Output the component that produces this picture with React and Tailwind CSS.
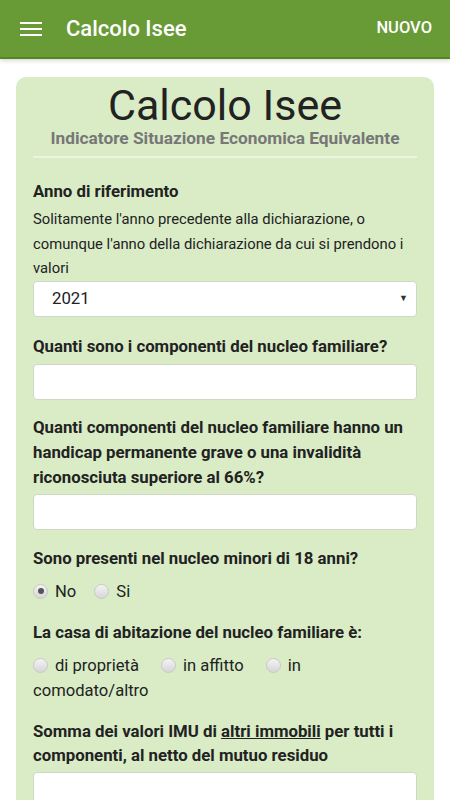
import React from "react";

function Radio({ checked }) {
  return (
    <span className="inline-block align-[-2px] w-[15px] h-[15px] rounded-full border border-[#c8c8c8] bg-[linear-gradient(#f4f4f4,#d6d6d6)] relative mr-[7px]">
      {checked && (
        <span className="absolute left-[3.5px] top-[3.5px] w-[6px] h-[6px] rounded-full bg-[#555]" />
      )}
    </span>
  );
}

function Input() {
  return <div className="h-[36px] bg-white rounded-[4px] border border-[#cfd8c6]" />;
}

export default function App() {
  return (
    <div className="w-[450px] min-h-[800px] bg-white font-['Roboto',sans-serif] text-[#222]">
      <div className="h-[59px] bg-[#689a35] border-b-[2px] border-[#55861f] shadow-[0_2px_4px_rgba(0,0,0,0.15)] flex items-center px-[20px] text-white">
        <svg width="22" height="16" viewBox="0 0 22 16" className="mr-[24px]">
          <rect x="0" y="1" width="22" height="2" fill="white" />
          <rect x="0" y="7" width="22" height="2" fill="white" />
          <rect x="0" y="13" width="22" height="2" fill="white" />
        </svg>
        <span className="text-[22px] font-medium">Calcolo Isee</span>
        <span className="ml-auto text-[16.5px] font-medium mr-[-2px]">NUOVO</span>
      </div>
      <div className="px-[16px] pt-[18px]">
        <div className="bg-[#d9ecc6] rounded-[10px] px-[17px] pt-[3px] pb-[20px]">
          <div className="text-center text-[43px] leading-[50px] text-[#222]">Calcolo Isee</div>
          <div className="text-center text-[17.3px] font-bold text-[#777] leading-[22px] mt-[-3px]">
            Indicatore Situazione Economica Equivalente
          </div>
          <div className="h-[2px] bg-[#eaf4e0] mt-[7px] mb-[21px]" />
          <div className="text-[16.8px] font-bold leading-[24px]">Anno di riferimento</div>
          <div className="text-[14.8px] leading-[24.5px] mt-[4px] text-[#222]">
            Solitamente l'anno precedente alla dichiarazione, o comunque l'anno della dichiarazione da cui si prendono i valori
          </div>
          <div className="h-[36px] mt-[0px] bg-white rounded-[4px] border border-[#cfd8c6] flex items-center pl-[18px] pr-[8px] text-[16.8px]">
            <span>2021</span>
            <span className="ml-auto text-[9px] text-[#333]">▼</span>
          </div>

          <div className="text-[16.8px] font-bold leading-[25px] mt-[17px] mb-[5px]">
            Quanti sono i componenti del nucleo familiare?
          </div>
          <Input />

          <div className="text-[16.8px] font-bold leading-[25px] mt-[15px] mb-[4px]">
            Quanti componenti del nucleo familiare hanno un handicap permanente grave o una invalidità riconosciuta superiore al 66%?
          </div>
          <Input />

          <div className="text-[16.8px] font-bold leading-[25px] mt-[16px] mb-[9px]">
            Sono presenti nel nucleo minori di 18 anni?
          </div>
          <div className="text-[16.6px] leading-[24px]">
            <label className="mr-[18px]"><Radio checked />No</label>
            <label><Radio />Si</label>
          </div>

          <div className="text-[16.8px] font-bold leading-[25px] mt-[16px] mb-[8px]">
            La casa di abitazione del nucleo familiare è:
          </div>
          <div className="text-[16.6px] leading-[25px]">
            <label className="mr-[22px]"><Radio />di proprietà</label>
            <label className="mr-[22px]"><Radio />in affitto</label>
            <label><Radio />in comodato/altro</label>
          </div>

          <div className="text-[16.8px] font-bold leading-[24px] mt-[16px] mb-[5px]">
            Somma dei valori IMU di <span className="underline">altri immobili</span> per tutti i componenti, al netto del mutuo residuo
          </div>
          <Input />
        </div>
      </div>
    </div>
  );
}
